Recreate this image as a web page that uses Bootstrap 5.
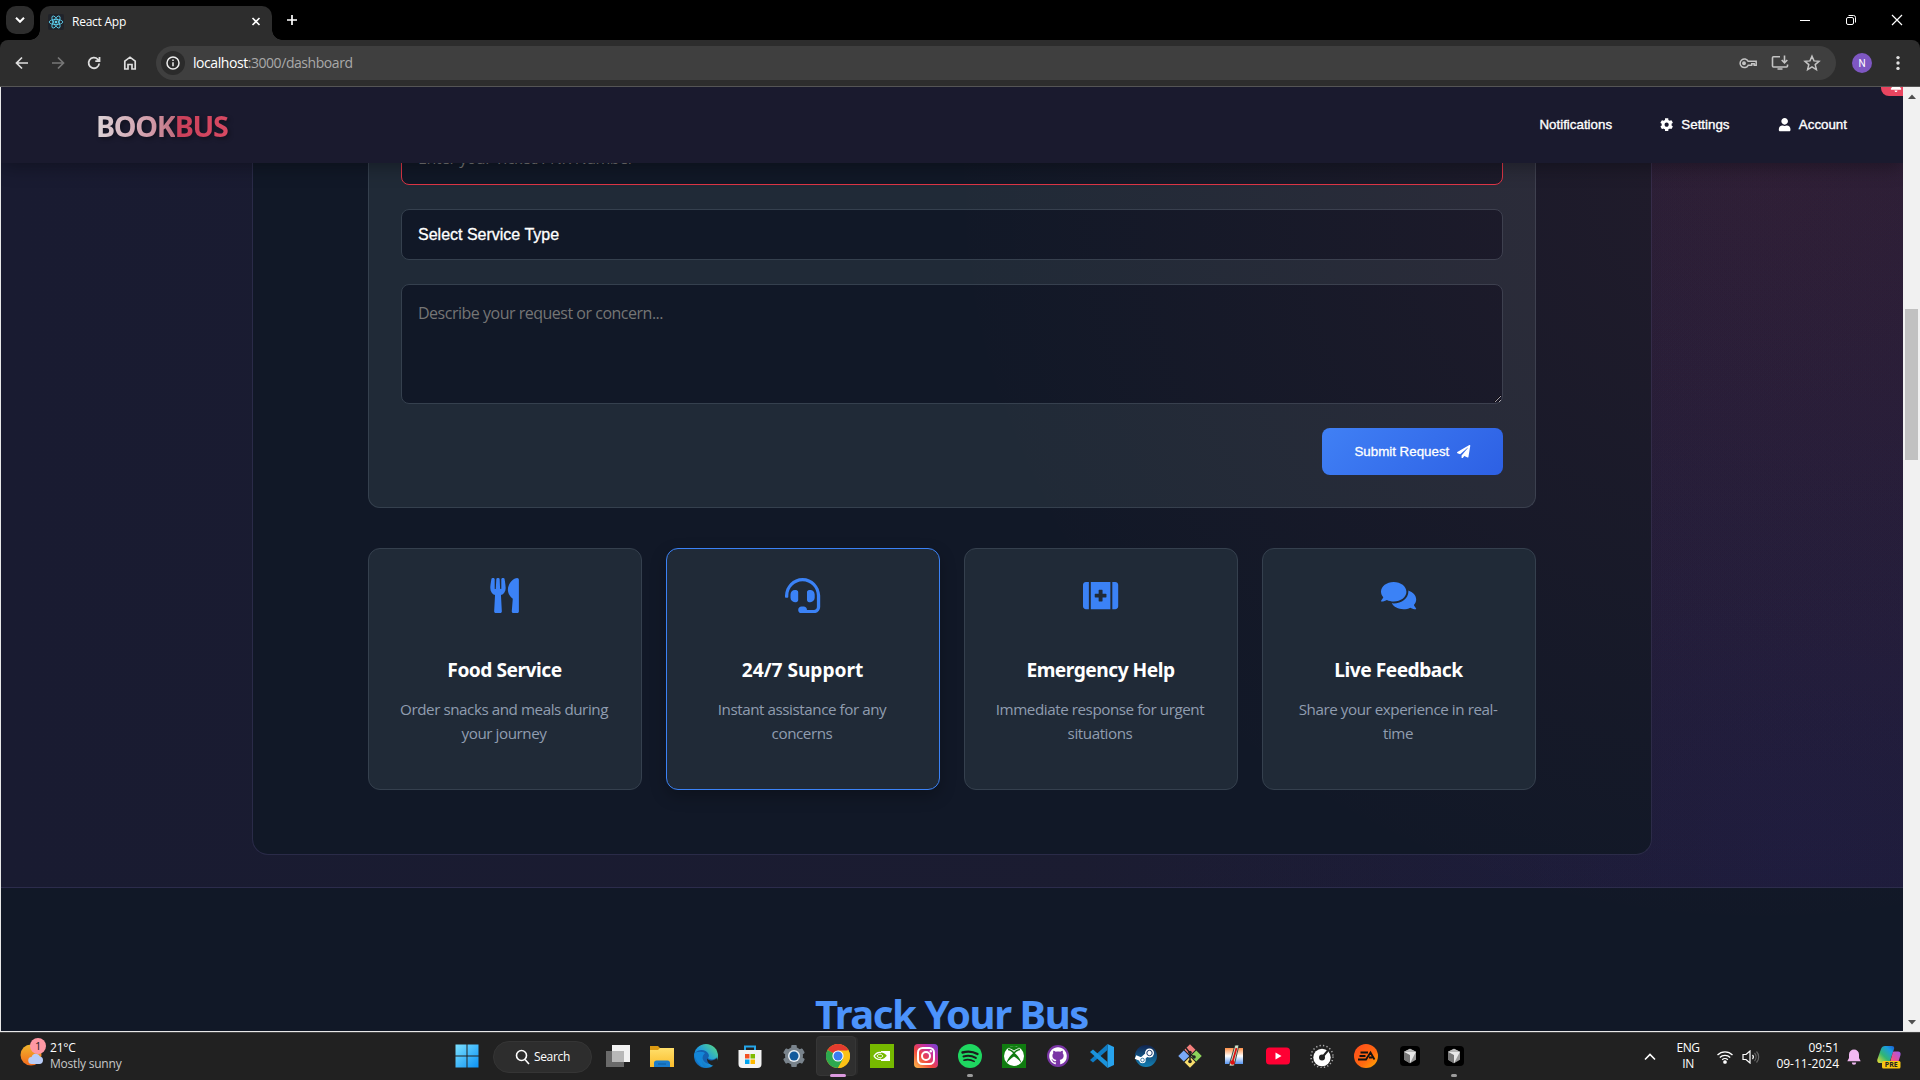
<!DOCTYPE html>
<html lang="en">
<head>
<meta charset="utf-8">
<title>React App</title>
<link href="https://cdn.jsdelivr.net/npm/bootstrap@5.3.0/dist/css/bootstrap.min.css" rel="stylesheet">
<script src="https://cdn.jsdelivr.net/npm/bootstrap@5.3.0/dist/js/bootstrap.bundle.min.js"></script>
<style>
:root{--ui:"Open Sans","Noto Sans",sans-serif;--bold:"Noto Sans","Open Sans",sans-serif;--form:"Liberation Sans",Arial,sans-serif}
body{width:1920px;height:1080px;overflow:hidden;background:#000;font-family:var(--ui);color:#fff}
svg{display:block;flex:none}
/* browser frame */
.tabstrip{height:40px;background:#000;padding-left:6px}
.tab-search{width:28px;height:28px;border-radius:10px;background:#2d2d2d;margin-top:6px}
.tab-active{position:relative;width:232px;height:34px;margin:6px 0 0 6px;padding:0 10px 2px 8px;border-radius:10px 10px 0 0;background:#2d2d2d;font-size:12px;letter-spacing:-.25px}
.tab-active::before,.tab-active::after{content:"";position:absolute;bottom:0;width:10px;height:10px}
.tab-active::before{left:-10px;background:radial-gradient(circle at 0 0,transparent 9.5px,#2d2d2d 10px)}
.tab-active::after{right:-10px;background:radial-gradient(circle at 100% 0,transparent 9.5px,#2d2d2d 10px)}
.favicon{width:16px;height:16px;border-radius:2px;background:#20232a}
.new-tab{margin:14px 0 0 14px}
.win-controls{gap:30px;padding-right:15px}
.toolbar{height:47px;background:#2d2d2d;border-bottom:1px solid #555;border-radius:8px 8px 0 0;padding:0 12px}
.tool-next{margin-left:16px}
.omnibox{width:1680px;height:34px;margin-left:16px;border-radius:17px;background:#3f3f3f;padding:0 14px 1px 5px;font-size:14px;letter-spacing:-.44px;color:#a9a9a9}
.omni-actions{gap:12px}
.url-text{margin-left:8px}
.site-info{width:24px;height:24px;border-radius:50%;background:#2b2b2b}
.avatar{width:20px;height:20px;margin-left:16px;border-radius:50%;background:#7e57c2;font-size:10px;font-family:Roboto,sans-serif}
.kebab{margin-left:24px}
/* page */
.page-frame{height:945px;background:#e8e8e8;padding-left:1px}
.page-view{position:relative;width:1902px;height:944px;overflow:hidden;
 background:radial-gradient(circle 720px at 1800px 760px,rgba(32,30,78,.45),transparent 100%),radial-gradient(circle 560px at 1890px 130px,rgba(120,45,90,.06),transparent 100%),linear-gradient(90deg,#191b31,#1b1c31 60%,#1c1b30)}
.site-header{position:absolute;inset:0 0 auto 0;z-index:5;height:76px;background:#1a1a2e;padding:0 56px 0 95px;box-shadow:0 4px 18px rgba(0,0,0,.32)}
.logo{font-family:var(--bold);font-size:28.8px;font-weight:700;letter-spacing:-1.3px;line-height:40px;margin-top:1px;filter:drop-shadow(2px 2px 2px rgba(0,0,0,.35))}
.logo-a,.logo-b{-webkit-background-clip:text;background-clip:text;color:transparent}
.logo-a{background-image:linear-gradient(90deg,#dcd3d7,#d29aa8 70%,#bf6e7e)}
.logo-b{background-image:linear-gradient(90deg,#c9405a,#d84a63)}
.nav-text{font:13.33px/20px var(--form);-webkit-text-stroke:.35px #fff;color:#fff}
.top-links{gap:48px}
.bell-pill{position:absolute;right:0;top:0;z-index:6;width:22px;height:9px;background:#e94560;border-radius:0 0 0 8px;overflow:hidden}
.bell-pill svg{margin:-7px 0 0 9px}
.glow{position:absolute;inset:0;pointer-events:none;background:radial-gradient(ellipse 820px 760px at 1760px 90px,rgba(233,69,96,.075),transparent 100%)}
.help-panel{width:1400px;height:768px;border:1px solid #2a2b48;border-top:0;border-radius:0 0 16px 16px;background:#111827;padding:0 115px}
.request-form{height:421px;background:#202a37;border:1px solid #35404e;border-top:0;border-radius:0 0 12px 12px;padding:47px 32px 0}
.field{display:block;width:100%;border:1px solid #35404e;border-radius:8px;background:#111827;color:#fff;padding:0 16px;margin-bottom:24px;font-size:16px;outline:0}
.field-bad{height:51px;border-color:#dc3545;padding-bottom:3px}
.field::placeholder{color:#757575;opacity:1;font-family:var(--ui);letter-spacing:-.49px}
.field-pick{height:51px;font-family:var(--form);-webkit-text-stroke:.3px #fff;appearance:none}
.field-note{height:120px;padding-top:16px;line-height:24px;font-family:var(--ui);resize:vertical}
.btn-send{width:181px;height:47px;border:0;border-radius:8px;background:linear-gradient(135deg,#4080f5,#2d60e4);font:13.33px/20px var(--form);color:#fff;-webkit-text-stroke:.3px #fff}
.services{margin-top:40px}
.service{width:274px;height:242px;border:1px solid #35404e;border-radius:12px;background:#202a37;padding:29px 24px 0;color:#3b82f6}
.service-on{border-color:#3b82f6;box-shadow:0 6px 16px rgba(0,0,0,.25)}
.service h3{font-family:var(--bold);font-size:19.2px;line-height:24px;font-weight:700;color:#fff;margin:45px -9px 15px -10px;letter-spacing:-.5px}
.service h3.wide-title{letter-spacing:-.06px}
.service p{font-size:15.2px;line-height:24px;color:#909db0;margin:0 -9px 0 -11px;letter-spacing:-.44px}
.track{border-top:1px solid #2c2c4c;height:160px;margin-top:32px;background:#111827;padding-top:102px}
.track h2{font-family:var(--bold);font-size:40px;line-height:48px;font-weight:700;letter-spacing:-1.43px;margin-right:1px;color:#4c93fb}
.above{position:relative;z-index:2}
.scroll-rail{width:17px;height:944px;background:#f1f1f1}
.scroll-rail .thumb{width:13px;height:151px;background:#c1c1c1;margin:210px 0 auto}
.rail-up{margin-top:7px}
.rail-down{margin-bottom:6px}
/* taskbar */
.taskbar{height:48px;background:#212121;border-top:1px solid #444;font-size:12px;position:relative}
.weather{width:445px;padding-left:20px;line-height:16px;letter-spacing:-.21px}
.weather svg{margin-top:-7px}
.weather-text{margin:-2px 0 0 3px}
.dim-text{color:#c8c8c8}
.task{width:44px;height:44px;display:flex;align-items:center;justify-content:center;position:relative;flex:none}
.task-on::before{content:"";position:absolute;left:-.5px;top:1px;width:40px;height:40px;border-radius:4px;background:#2f2f2f;border:1px solid #363636;box-shadow:3px 0 0 -1px #292929}
.task svg{position:relative;margin-top:-2px}
.task i{position:absolute;bottom:2px;width:6px;height:3px;border-radius:2px;background:#9b9b9b}
.task-on i{width:16px;background:#dc9ae0}
.search-pill{width:99px;height:32px;border-radius:16px;background:#2d2d2d;border:1px solid #353535;margin:0 4px;letter-spacing:-.3px}
.tray{line-height:16px;padding-right:19px}
.tray-lang{width:24px;margin:-1px 0 0 20px;letter-spacing:-.4px}
.tray-clock{width:79px;margin-top:-1px}
</style>
</head>
<body class="d-flex flex-column">
<svg width="0" height="0" class="position-absolute">
<defs>
<linearGradient id="gw" x2="1" y2="1"><stop stop-color="#7be0ff"/><stop offset="1" stop-color="#0b92f5"/></linearGradient>
<linearGradient id="gi" x1="0" y1="1" x2="1" y2="0"><stop stop-color="#fdc04a"/><stop offset=".4" stop-color="#f0463f"/><stop offset=".7" stop-color="#c32fa5"/><stop offset="1" stop-color="#6a45d8"/></linearGradient>
<linearGradient id="ge" x1="0" y1="1" x2="1" y2="0"><stop stop-color="#0b5db5"/><stop offset=".5" stop-color="#1f9bde"/><stop offset="1" stop-color="#5fe07a"/></linearGradient>
<linearGradient id="gf" y2="1" x2="0"><stop stop-color="#ffdf6b"/><stop offset="1" stop-color="#fbbd2c"/></linearGradient>
<linearGradient id="gs" y2="1" x2="0"><stop stop-color="#11244f"/><stop offset="1" stop-color="#1380b4"/></linearGradient>
<linearGradient id="ga" x2="1" y2="1"><stop stop-color="#ff4a1c"/><stop offset=".6" stop-color="#ff6a10"/><stop offset="1" stop-color="#ffb000"/></linearGradient>
<linearGradient id="gc" x1="0" y1="1" x2="1" y2="0"><stop stop-color="#f6e02e"/><stop offset=".4" stop-color="#31b673"/><stop offset=".75" stop-color="#1a9be0"/><stop offset="1" stop-color="#1a58d0"/></linearGradient>
<linearGradient id="gp" x1="0" y1="1" x2="1" y2="0"><stop stop-color="#ff7a45"/><stop offset=".5" stop-color="#e44f9d"/><stop offset="1" stop-color="#9a5cf0"/></linearGradient>
<linearGradient id="gt" y2="1" x2="0"><stop stop-color="#ff8a3c"/><stop offset=".5" stop-color="#fff"/><stop offset="1" stop-color="#4a8df0"/></linearGradient>
<linearGradient id="gm" y2="1" x2="0"><stop stop-color="#f0b62c"/><stop offset="1" stop-color="#f36a1c"/></linearGradient>
<symbol id="cube" viewBox="0 0 24 24"><rect x="2" y="2" width="20" height="20" rx="4" fill="#000"/><path d="M12 4.800l6 3v8l-6 3.500-6-3.500v-8z" fill="#9a9a9a"/><path d="M6 7.800l6 3v8.500l-6-3.500z" fill="#777"/><path d="M6 7.800h12l-6 11.500V11z" fill="#e8e8e8"/><path d="M6 7.800l6-3 6 3z" fill="#bbb"/></symbol>
</defs>
</svg>

<div class="tabstrip d-flex align-items-start">
  <div class="tab-search d-flex align-items-center justify-content-center"><svg width="10" height="6" viewBox="0 0 10 6" fill="none" stroke="#fff" stroke-width="2"><path d="M1 .8l4 4 4-4"/></svg></div>
  <div class="tab-active d-flex align-items-center">
    <div class="favicon me-2"><svg width="16" height="16" viewBox="0 0 16 16" fill="none" stroke="#61dafb" stroke-width=".8"><ellipse cx="8" cy="8" rx="6.800" ry="2.600"/><ellipse cx="8" cy="8" rx="6.800" ry="2.600" transform="rotate(60 8 8)"/><ellipse cx="8" cy="8" rx="6.800" ry="2.600" transform="rotate(120 8 8)"/><circle cx="8" cy="8" r="1" fill="#61dafb"/></svg></div>
    <span>React App</span>
    <svg class="ms-auto" width="12" height="12" viewBox="0 0 12 12" stroke="#fff" stroke-width="1.600"><path d="M2.500 2l7 7M9.500 2l-7 7"/></svg>
  </div>
  <svg class="new-tab" width="12" height="12" viewBox="0 0 12 12" stroke="#fff" stroke-width="1.700"><path d="M6 1v10M1 6h10"/></svg>
  <div class="win-controls d-flex align-items-center ms-auto h-100">
    <svg width="16" height="16" viewBox="0 0 16 16" stroke="#fff"><path d="M3 8.500h10"/></svg>
    <svg width="16" height="16" viewBox="0 0 16 16" fill="none" stroke="#fff"><rect x="3.500" y="5.500" width="7" height="7" rx="1.500"/><path d="M5.500 3.500h5a2 2 0 0 1 2 2v5"/></svg>
    <svg width="16" height="16" viewBox="0 0 16 16" stroke="#fff" stroke-width="1.200"><path d="M3 3l10 10M13 3L3 13"/></svg>
  </div>
</div>

<div class="toolbar d-flex align-items-center">
  <svg width="20" height="20" viewBox="0 0 20 20" fill="none" stroke="#dedede" stroke-width="1.700"><path d="M16 10H5M10 4.500L4.500 10l5.500 5.500"/></svg>
  <svg class="tool-next" width="20" height="20" viewBox="0 0 20 20" fill="none" stroke="#777" stroke-width="1.700"><path d="M4 10h11M10 4.500l5.500 5.500-5.500 5.500"/></svg>
  <svg class="tool-next" width="20" height="20" viewBox="0 0 20 20" fill="none" stroke="#dedede" stroke-width="1.800"><path d="M15.200 10.500a5.300 5.300 0 1 1-1.400-4.200L15 7.500M15.500 4v4.200h-4.200"/></svg>
  <svg class="tool-next" width="20" height="20" viewBox="0 0 20 20" fill="none" stroke="#dedede" stroke-width="1.700"><path d="M4.800 16V8.200L10 4.200l5.200 4V16H12v-4.500H8V16z"/></svg>
  <div class="omnibox d-flex align-items-center">
    <div class="site-info d-flex align-items-center justify-content-center"><svg width="16" height="16" viewBox="0 0 16 16" fill="none" stroke="#eee" stroke-width="1.500"><circle cx="8" cy="8" r="6"/><path d="M8 7.200v4M8 4.500v1.600"/></svg></div>
    <span class="url-text"><span class="text-white">localhost</span>:3000/dashboard</span>
    <div class="omni-actions ms-auto d-flex align-items-center">
      <svg width="20" height="20" viewBox="0 0 20 20" fill="none" stroke="#c4c4c4" stroke-width="1.500"><path d="M10.200 8.300h8v4h-2v-1.500h-2.500v1.500h-3.500a4.300 4.300 0 1 1 0-4z"/><circle cx="6" cy="10.200" r="1.200" fill="#c4c4c4"/></svg>
      <svg width="20" height="20" viewBox="0 0 20 20" fill="none" stroke="#c4c4c4" stroke-width="1.600"><path d="M10 3.800H3.500a1 1 0 0 0-1 1V13a1 1 0 0 0 1 1h13a1 1 0 0 0 1-1v-1.500M7.500 16h5M14.500 2.500v7M11.700 7l2.800 2.800L17.300 7"/></svg>
      <svg width="20" height="20" viewBox="0 0 20 20" fill="none" stroke="#c4c4c4" stroke-width="1.500"><path d="M10 3.200l2 4.700 5 .4-3.800 3.300 1.200 5L10 13.900l-4.400 2.700 1.200-5L3 8.300l5-.4z"/></svg>
    </div>
  </div>
  <div class="avatar d-flex align-items-center justify-content-center">N</div>
  <svg class="kebab" width="4" height="16" viewBox="0 0 4 16" fill="#e0e0e0"><circle cx="2" cy="2.600" r="1.700"/><circle cx="2" cy="8" r="1.700"/><circle cx="2" cy="13.400" r="1.700"/></svg>
</div>

<div class="page-frame d-flex align-items-start">
  <div class="page-view">
    <header class="site-header d-flex align-items-center justify-content-between">
      <div class="logo"><span class="logo-a">BOOK</span><span class="logo-b">BUS</span></div>
      <nav class="top-links d-flex align-items-center nav-text">
        <span>Notifications</span>
        <span class="d-flex align-items-center gap-2"><svg width="13.300" height="13.300" viewBox="0 0 512 512" fill="#fff"><path d="M487.400 315.700l-42.600-24.600c4.300-23.200 4.300-47 0-70.200l42.600-24.600c4.900-2.800 7.100-8.600 5.500-14-11.100-35.600-30-67.800-54.700-94.600-3.800-4.100-10-5.100-14.800-2.300L380.800 110c-17.900-15.400-38.500-27.300-60.800-35.100V25.800c0-5.600-3.900-10.500-9.400-11.700-36.700-8.200-74.300-7.800-109.200 0-5.500 1.200-9.400 6.100-9.400 11.700V75c-22.200 7.900-42.800 19.800-60.800 35.100L88.700 85.500c-4.900-2.800-11-1.900-14.800 2.300-24.700 26.700-43.600 58.900-54.700 94.600-1.700 5.400.6 11.200 5.500 14L67.300 221c-4.300 23.200-4.300 47 0 70.200l-42.600 24.600c-4.900 2.800-7.100 8.600-5.500 14 11.100 35.600 30 67.800 54.700 94.600 3.800 4.100 10 5.100 14.800 2.300l42.600-24.600c17.900 15.400 38.500 27.300 60.800 35.100v49.200c0 5.600 3.900 10.500 9.400 11.700 36.700 8.200 74.300 7.800 109.200 0 5.500-1.200 9.400-6.100 9.400-11.700v-49.200c22.200-7.900 42.800-19.800 60.800-35.100l42.600 24.600c4.900 2.800 11 1.900 14.800-2.300 24.700-26.700 43.600-58.900 54.700-94.600 1.500-5.500-.7-11.300-5.600-14.100zM256 336c-44.100 0-80-35.900-80-80s35.900-80 80-80 80 35.900 80 80-35.900 80-80 80z"/></svg>Settings</span>
        <span class="d-flex align-items-center gap-2"><svg width="13.300" height="13.300" viewBox="0 0 448 512" fill="#fff"><path d="M224 256c70.700 0 128-57.300 128-128S294.700 0 224 0 96 57.300 96 128s57.300 128 128 128zm89.600 32h-16.700c-22.200 10.200-46.900 16-72.900 16s-50.600-5.800-72.900-16h-16.700C60.200 288 0 348.200 0 422.400V464c0 26.500 21.500 48 48 48h352c26.500 0 48-21.500 48-48v-41.600c0-74.200-60.200-134.400-134.400-134.400z"/></svg>Account</span>
      </nav>
    </header>
    <div class="bell-pill"><svg width="12" height="12" viewBox="0 0 448 512" fill="#fff"><path d="M224 512c35.320 0 63.970-28.650 63.970-64H160.030c0 35.350 28.650 64 63.970 64zm215.390-149.710c-19.320-20.760-55.470-51.990-55.470-154.290 0-77.700-54.480-139.900-127.940-155.160V32c0-17.670-14.320-32-31.980-32s-31.980 14.330-31.980 32v20.840C118.560 68.100 64.080 130.300 64.080 208c0 102.300-36.150 133.530-55.470 154.290-6 6.450-8.660 14.160-8.610 21.710.11 16.400 12.980 32 32.100 32h383.800c19.120 0 32-15.600 32.100-32 .05-7.550-2.610-15.270-8.610-21.710z"/></svg></div>

    <main>
      <section class="help-panel mx-auto">
        <form class="request-form">
          <input class="field field-bad" placeholder="Enter your Ticket/PNR Number">
          <select class="field field-pick"><option>Select Service Type</option></select>
          <textarea class="field field-note" placeholder="Describe your request or concern..."></textarea>
          <div class="d-flex justify-content-end above">
            <button type="button" class="btn-send d-flex align-items-center justify-content-center gap-2">Submit Request<svg width="13.300" height="13.300" viewBox="0 0 512 512" fill="#fff"><path d="M476 3.200L12.500 270.600c-18.100 10.400-15.800 35.600 2.200 43.200L121 358.400l287.300-253.200c5.500-4.900 13.300 2.600 8.600 8.300L176 407v80.500c0 23.600 28.500 32.900 42.500 15.800L282 426l124.600 52.200c14.200 6 30.400-2.900 33-18.200l72-432C515 7.800 493.300-6.800 476 3.200z"/></svg></button>
          </div>
        </form>
        <div class="services d-flex justify-content-between text-center above">
          <article class="service"><svg class="mx-auto" width="35.200" height="35.200" viewBox="0 0 416 512" fill="currentColor"><path d="M207.900 15.200c.8 4.700 16.100 94.500 16.100 128.800 0 52.300-27.800 89.600-68.900 104.600L168 486.700c.7 13.700-10.200 25.300-24 25.300H80c-13.700 0-24.700-11.500-24-25.300l12.900-238.100C27.700 233.600 0 196.200 0 144 0 109.600 15.300 19.900 16.100 15.200 19.300-5.100 61.400-5.400 64 16.300v141.200c1.300 3.400 15.100 3.200 16 0 1.400-25.300 7.900-139.200 8-141.800 3.300-20.800 44.700-20.800 47.900 0 .2 2.700 6.600 116.500 8 141.800.9 3.200 14.800 3.400 16 0V16.300c2.600-21.600 44.800-21.400 48-1.100zm119.200 285.700l-15 185.100c-1.200 14 9.900 26 23.900 26h56c13.300 0 24-10.700 24-24V24c0-13.200-10.700-24-24-24-82.500 0-221.400 178.500-64.900 300.900z"/></svg><h3>Food Service</h3><p>Order snacks and meals during<br>your journey</p></article>
          <article class="service service-on"><svg class="mx-auto" width="35.200" height="35.200" viewBox="0 0 512 512" fill="currentColor"><path d="M192 208c0-17.670-14.330-32-32-32h-16c-35.350 0-64 28.650-64 64v48c0 35.350 28.650 64 64 64h16c17.670 0 32-14.330 32-32V208zm176 144c35.350 0 64-28.650 64-64v-48c0-35.350-28.650-64-64-64h-16c-17.670 0-32 14.330-32 32v112c0 17.670 14.330 32 32 32h16zM256 0C113.180 0 4.580 118.830 0 256v16c0 8.840 7.160 16 16 16h16c8.840 0 16-7.160 16-16v-16c0-114.690 93.310-208 208-208s208 93.310 208 208h-.12c.08 2.430.12 165.720.12 165.720 0 23.350-18.930 42.280-42.280 42.280H320c0-26.510-21.490-48-48-48h-32c-26.510 0-48 21.490-48 48s21.490 48 48 48h181.720c49.860 0 90.280-40.420 90.280-90.280V256C507.420 118.830 398.820 0 256 0z"/></svg><h3 class="wide-title">24/7 Support</h3><p>Instant assistance for any<br>concerns</p></article>
          <article class="service"><svg class="mx-auto" width="35.200" height="35.200" viewBox="0 0 576 512" fill="currentColor"><path d="M0 80v352c0 26.500 21.500 48 48 48h48V32H48C21.500 32 0 53.500 0 80zm128 400h320V32H128v448zm64-248c0-4.400 3.600-8 8-8h56v-56c0-4.400 3.600-8 8-8h48c4.400 0 8 3.600 8 8v56h56c4.400 0 8 3.600 8 8v48c0 4.400-3.600 8-8 8h-56v56c0 4.400-3.600 8-8 8h-48c-4.400 0-8-3.600-8-8v-56h-56c-4.400 0-8-3.600-8-8v-48zM528 32h-48v448h48c26.500 0 48-21.500 48-48V80c0-26.500-21.500-48-48-48z"/></svg><h3>Emergency Help</h3><p>Immediate response for urgent<br>situations</p></article>
          <article class="service"><svg class="mx-auto" width="35.200" height="35.200" viewBox="0 0 576 512" fill="currentColor"><path d="M416 192c0-88.400-93.100-160-208-160S0 103.600 0 192c0 34.300 14.100 65.900 38 92-13.400 30.200-35.500 54.200-35.800 54.500-2.200 2.300-2.800 5.700-1.500 8.700S4.800 352 8 352c36.600 0 66.900-12.300 88.700-25 32.200 15.700 70.300 25 111.300 25 114.900 0 208-71.600 208-160zm122 220c23.900-26 38-57.700 38-92 0-66.900-53.500-124.200-129.300-148.100.9 6.600 1.300 13.300 1.300 20.100 0 105.900-107.700 192-240 192-10.800 0-21.300-.8-31.700-1.900C207.800 439.600 281.800 480 368 480c41 0 79.100-9.200 111.300-25 21.800 12.700 52.100 25 88.700 25 3.200 0 6.100-1.900 7.300-4.800 1.300-2.900.7-6.300-1.500-8.700-.3-.3-22.400-24.200-35.800-54.500z"/></svg><h3>Live Feedback</h3><p>Share your experience in real-<br>time</p></article>
        </div>
      </section>
      <section class="track text-center"><h2>Track Your Bus</h2></section>
    </main>
    <div class="glow"></div>
  </div>
  <div class="scroll-rail d-flex flex-column align-items-center">
    <svg class="rail-up" width="8" height="5" viewBox="0 0 8 5" fill="#505050"><path d="M0 5l4-4.500L8 5z"/></svg>
    <div class="thumb"></div>
    <svg class="rail-down" width="8" height="5" viewBox="0 0 8 5" fill="#505050"><path d="M0 0l4 4.500L8 0z"/></svg>
  </div>
</div>

<footer class="taskbar d-flex align-items-center">
  <div class="weather d-flex align-items-center">
    <svg width="27" height="30" viewBox="0 0 27 30"><circle cx="11" cy="17" r="10.500" fill="url(#gm)"/><path d="M12 26a3.500 3.500 0 0 1-.5-7 4.500 4.500 0 0 1 8.500-.5 3.800 3.800 0 0 1-.5 7.500z" fill="#b9cdf7"/><circle cx="18" cy="8" r="8" fill="#ff98a3"/><text x="18" y="12" text-anchor="middle" font-family="Open Sans" font-size="11" fill="#222">1</text></svg>
    <div class="weather-text"><div>21°C</div><div class="dim-text">Mostly sunny</div></div>
  </div>
  <div class="task"><svg width="24" height="24" viewBox="0 0 24 24" fill="url(#gw)"><path d="M.5.500h11v11H.5zM12.500.500h11v11h-11zM.5 12.500h11v11H.5zM12.500 12.500h11v11h-11z"/></svg></div>
  <div class="search-pill d-flex align-items-center justify-content-center gap-1"><svg width="15" height="16" viewBox="0 0 15 16" fill="none" stroke="#fff" stroke-width="1.600"><circle cx="6.500" cy="6.500" r="5"/><path d="M10 10.500l4 4.500"/></svg><span>Search</span></div>
  <div class="task"><svg width="24" height="24" viewBox="0 0 24 24"><rect x="6" y="1" width="18" height="17" fill="#f2f2f2"/><rect x="0" y="7" width="18" height="16" fill="#777" opacity=".85"/><path d="M6 7h12v11H6z" fill="#b8b8b8"/></svg></div>
  <div class="task"><svg width="24" height="24" viewBox="0 0 24 24"><path d="M0 2h8l3 3h12v4H0z" fill="#dc9a12"/><path d="M0 6h8l2-2h14v19H0z" fill="url(#gf)"/><path d="M4 23v-4a2.500 2.500 0 0 1 2.500-2.500h11A2.500 2.500 0 0 1 20 19v4z" fill="#1a7ccc"/><path d="M8 20h8" stroke="#0f5c9e"/></svg></div>
  <div class="task"><svg width="24" height="24" viewBox="0 0 24 24"><circle cx="12" cy="12" r="12" fill="url(#ge)"/><path d="M1 9c3-4 11-4 13.500 1 1 2.500 0 3-.5 4 3 2.500 7 1.500 9-1-1 5-6 8-10 6.500-5-2-6-8-2.500-10.500C7 7.500 3.500 8 1 9z" fill="#1460b0"/><path d="M13 14.500c2.500 3 7.500 2.500 10-.5l1 5-4 3c-4-1-7-3-7-7.500z" fill="#212121"/><path d="M.5 10C2 16 4 21 11 23.800 7 20 6.500 13 11 9 7 7 3 7.500.5 10z" fill="#1386d8"/></svg></div>
  <div class="task"><svg width="24" height="24" viewBox="0 0 24 24"><path d="M7 6V2.500h10V6" fill="none" stroke="#25a5e8" stroke-width="2"/><path d="M.5 6h23v14a4 4 0 0 1-4 4h-15a4 4 0 0 1-4-4z" fill="#f3f3f3"/><path d="M7 10h4.500v4.500H7z" fill="#f25022"/><path d="M12.500 10H17v4.500h-4.500z" fill="#7fba00"/><path d="M7 15.500h4.500V20H7z" fill="#00a4ef"/><path d="M12.500 15.500H17V20h-4.500z" fill="#ffb900"/></svg></div>
  <div class="task"><svg width="24" height="24" viewBox="0 0 24 24"><g fill="#79838c"><circle cx="12" cy="12" r="9"/><rect x="9.200" y="1" width="5.600" height="22" rx="1"/><rect x="9.200" y="1" width="5.600" height="22" rx="1" transform="rotate(60 12 12)"/><rect x="9.200" y="1" width="5.600" height="22" rx="1" transform="rotate(120 12 12)"/></g><circle cx="12" cy="12" r="6" fill="#e8eef4"/><circle cx="12" cy="12" r="4.500" fill="#12599c"/></svg></div>
  <div class="task task-on"><svg width="24" height="24" viewBox="0 0 24 24"><circle cx="12" cy="12" r="12" fill="#fbc116"/><path d="M12 12L1.600 6A12 12 0 0 1 22.400 6z" fill="#e33b2e"/><path d="M1.600 6A12 12 0 0 0 12 24l5.200-9L12 12z" fill="#2da94f"/><path d="M12 6.500H22.600A12 12 0 0 1 12 24l5-9z" fill="#fbc116"/><circle cx="12" cy="12" r="5.600" fill="#fff"/><circle cx="12" cy="12" r="4.500" fill="#3a7df0"/></svg><i></i></div>
  <div class="task"><svg width="24" height="24" viewBox="0 0 24 24"><rect width="24" height="24" fill="#76b900"/><path d="M11 7h9v10h-9z" fill="#fff"/><g fill="none" stroke="#fff" stroke-width="1.200"><path d="M4 12c3-4.500 8-5 11-.5-3 5-8 5.500-11 .5z"/></g><path d="M11 8.500c2.500.2 4.500 1.500 5.800 3.300-1.500 2-3.500 3.300-5.800 3.500z" fill="#76b900"/><path d="M7 12c1.500-2.300 4.500-2.300 6 0-1.500 2.300-4.500 2.300-6 0z" fill="none" stroke="#fff"/></svg></div>
  <div class="task"><svg width="24" height="24" viewBox="0 0 24 24"><rect width="24" height="24" rx="4" fill="url(#gi)"/><g fill="none" stroke="#fff" stroke-width="2"><rect x="4" y="4" width="16" height="16" rx="4.500"/><circle cx="12" cy="12" r="4"/></g><circle cx="16.800" cy="7.200" r="1.200" fill="#fff"/></svg></div>
  <div class="task"><svg width="24" height="24" viewBox="0 0 24 24"><circle cx="12" cy="12" r="12" fill="#1ed760"/><g fill="none" stroke="#1c1c1c" stroke-linecap="round"><path d="M4.500 8.500c5-1.500 10.500-1 15 1.500" stroke-width="2.400"/><path d="M5.500 12.500c4-1.200 8.500-.8 12.300 1.400" stroke-width="2"/><path d="M6 16.200c3.500-1 7-.6 10.200 1.200" stroke-width="1.600"/></g></svg><i></i></div>
  <div class="task"><svg width="24" height="24" viewBox="0 0 24 24"><rect width="24" height="24" fill="#107c10"/><circle cx="12" cy="12" r="10" fill="#fff"/><path d="M5.500 4.500c2-.8 4.500.500 6.500 2 2-1.500 4.500-2.800 6.500-2C16.500 2.700 14 2 12 2s-4.500.7-6.500 2.500z" fill="#107c10"/><path d="M12 8.500c3.500 2.500 7 7 7.500 11-2-3-5-5.500-7.500-7-2.500 1.500-5.500 4-7.500 7 .5-4 4-8.500 7.500-11z" fill="#107c10"/><path d="M6 5.500c2 0 4 1.500 6 3.500 2-2 4-3.500 6-3.500" fill="none" stroke="#107c10" stroke-width="1.600"/></svg></div>
  <div class="task"><svg width="22" height="22" viewBox="0 0 16 16"><circle cx="8" cy="8" r="8" fill="#7a35a5"/><path transform="translate(1.600 1.600) scale(.8)" fill="#fff" d="M8 0C3.580 0 0 3.580 0 8c0 3.540 2.290 6.530 5.470 7.590.4.070.55-.17.55-.38 0-.19-.01-.82-.01-1.490-2.010.37-2.530-.49-2.690-.94-.09-.23-.48-.94-.82-1.130-.28-.15-.68-.52-.01-.53.63-.01 1.080.58 1.230.82.72 1.210 1.870.87 2.330.66.07-.52.28-.87.51-1.070-1.780-.2-3.640-.89-3.640-3.950 0-.87.31-1.590.82-2.150-.08-.2-.36-1.020.08-2.120 0 0 .67-.21 2.200.82.64-.18 1.320-.27 2-.27s1.360.09 2 .27c1.530-1.040 2.200-.82 2.200-.82.44 1.100.16 1.920.08 2.120.51.56.82 1.270.82 2.150 0 3.070-1.870 3.750-3.650 3.950.29.25.54.73.54 1.480 0 1.070-.01 1.930-.01 2.200 0 .21.15.46.55.38A8.010 8.010 0 0 0 16 8c0-4.420-3.580-8-8-8z"/></svg></div>
  <div class="task"><svg width="24" height="24" viewBox="0 0 24 24"><path d="M17.500 0L24 3v18l-6.500 3z" fill="#27a3ee"/><path d="M17.500 0v6L3 18.500 0 16z" fill="#0f7cc4"/><path d="M17.500 24v-6L3 5.500 0 8z" fill="#1b93db"/></svg></div>
  <div class="task"><svg width="24" height="24" viewBox="0 0 24 24"><circle cx="12" cy="12" r="11" fill="url(#gs)"/><path d="M1.500 13l6 2.500 5-4.500" fill="none" stroke="#fff" stroke-width="4"/><circle cx="15.500" cy="9" r="4.500" fill="#fff"/><circle cx="15.500" cy="9" r="2.700" fill="#fff" stroke="#1c3b6e" stroke-width="1"/><circle cx="8.500" cy="16" r="3.200" fill="#fff"/><circle cx="8.500" cy="16" r="1.800" fill="none" stroke="#1c5f92" stroke-width=".8"/></svg></div>
  <div class="task"><svg width="24" height="24" viewBox="0 0 24 24"><g transform="rotate(45 12 12)"><rect x="3.700" y="3.700" width="7.800" height="7.800" fill="#f47f7c"/><rect x="12.500" y="3.700" width="7.800" height="7.800" fill="#8ed35b"/><rect x="3.700" y="12.500" width="7.800" height="7.800" fill="#7aa9f7"/><rect x="12.500" y="12.500" width="7.800" height="7.800" fill="#f8dd6c"/></g><path d="M8 4l4 5v8M12 10l4 3" stroke="#222" stroke-width="1.500" fill="none"/><g fill="#222"><circle cx="12" cy="8.500" r="1.800"/><circle cx="16" cy="13" r="1.800"/><circle cx="12" cy="17.500" r="1.800"/></g></svg></div>
  <div class="task"><svg width="24" height="24" viewBox="0 0 24 24"><rect x="2.500" y="3.500" width="19" height="17" fill="url(#gt)" stroke="#222"/><path d="M13 1h4l-5 21H7z" fill="#cfe6cb" stroke="#222" stroke-width=".8"/><path d="M14.500 4l-4 14" stroke="#d11" stroke-width="1.800"/><circle cx="10.500" cy="18.500" r="2.300" fill="#d11"/></svg></div>
  <div class="task"><svg width="24" height="24" viewBox="0 0 24 24"><rect y="3.500" width="24" height="17" rx="3.500" fill="#ff0033"/><path d="M9.500 8.500v7l6-3.500z" fill="#fff"/></svg></div>
  <div class="task"><svg width="24" height="24" viewBox="0 0 24 24"><circle cx="12" cy="12.500" r="11" fill="none" stroke="#aaa" stroke-width="1.500" stroke-dasharray="1.300 2.200"/><circle cx="12" cy="13.500" r="8.700" fill="#fff"/><path d="M12 13.500l6-7" stroke="#222" stroke-width="2"/><circle cx="12" cy="13.500" r="3" fill="#222"/></svg></div>
  <div class="task"><svg width="24" height="24" viewBox="0 0 24 24"><circle cx="12" cy="12" r="12" fill="url(#ga)"/><g fill="none" stroke="#111" stroke-width="1.800"><path d="M6.500 8.500H14M5.500 12h6M4 15.500h8l4.500-7 4 7M15 13.500h3.500"/></g></svg></div>
  <div class="task"><svg width="24" height="24"><use href="#cube"/></svg></div>
  <div class="task"><svg width="24" height="24"><use href="#cube"/></svg><i></i></div>

  <div class="tray d-flex align-items-center ms-auto">
    <svg width="12" height="8" viewBox="0 0 12 8" fill="none" stroke="#fff" stroke-width="1.600"><path d="M1 6.500l5-5 5 5"/></svg>
    <div class="tray-lang text-center">ENG<br>IN</div>
    <svg class="ms-3 me-1" width="18" height="14" viewBox="0 0 18 14" fill="none" stroke="#fff" stroke-width="1.300"><path d="M1.500 5a10.500 10.500 0 0 1 15 0M3.800 7.500a7.300 7.300 0 0 1 10.400 0M6.200 9.800a4 4 0 0 1 5.600 0"/><circle cx="9" cy="12" r="1.200" fill="#fff"/></svg>
    <svg class="ms-1" width="18" height="14" viewBox="0 0 18 14" fill="none" stroke="#fff" stroke-width="1.200"><path d="M1 4.500h3l4-3.500v12L4 9.500H1z"/><path d="M10.500 5a3 3 0 0 1 0 4"/><path d="M12.500 3a6 6 0 0 1 0 8M14.500 1.500a8 8 0 0 1 0 11" stroke="#666"/></svg>
    <div class="tray-clock text-end">09:51<br>09-11-2024</div>
    <svg class="ms-2 me-3" width="14" height="16" viewBox="0 0 14 16" fill="#f1b8f1"><path d="M7 .500a5 5 0 0 1 5 5V9l1.700 3.200H.3L2 9V5.500a5 5 0 0 1 5-5zM4.800 13.500h4.400a2.200 2.200 0 0 1-4.400 0z"/></svg>
    <svg width="24" height="24" viewBox="0 0 24 24"><path d="M8 1h7c2 0 2.500 1.500 2 3l-4 12c-.5 1.500-1.500 2-3 2H3c-2.500 0-3.200-2-2.500-4L4 4c.7-2 2-3 4-3z" fill="url(#gc)"/><path d="M16.500 6.500H21c2 0 3 1.500 2.500 3.500L21 18c-.5 2-2 3-4 3h-5l3.500-12.500c.2-1 .4-1.500 1-2z" fill="url(#gp)"/><rect x="5" y="16" width="18.500" height="7.500" rx="1.500" fill="#f8c612"/><text x="14.300" y="22.400" text-anchor="middle" font-family="Open Sans" font-weight="700" font-size="7" fill="#222">PRE</text></svg>
  </div>
</footer>
</body>
</html>
